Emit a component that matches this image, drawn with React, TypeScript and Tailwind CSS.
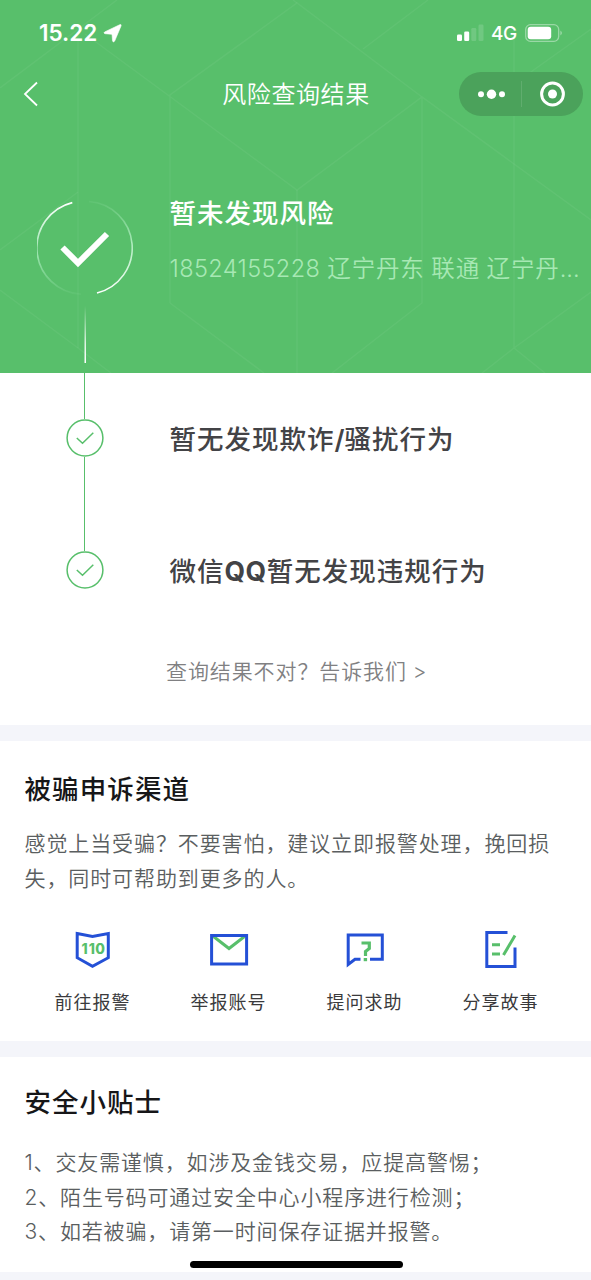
import React from 'react';

const GREEN = '#58bf6b';
const BLUE = '#2450d6';

const tips = [
  '1、交友需谨慎，如涉及金钱交易，应提高警惕；',
  '2、陌生号码可通过安全中心小程序进行检测；',
  '3、如若被骗，请第一时间保存证据并报警。',
];

function HexPattern() {
  return (
    <svg className="absolute inset-0 h-full w-full" viewBox="0 0 591 373" fill="none" stroke="#fff" strokeOpacity="0.05" strokeWidth="1.5">
      <path d="M0 88L117 0M78 36V348M85 34L297 190L422 97L591 220M170 303V95L297 3L422 97V303L332 373" />
      <path d="M297 3L293 0M0 250L78 192M0 290L78 348L111 373M170 303L264 373M297 190V373" />
      <path d="M363 49L428 0M514 36V348M514 84L591 29M482 373L514 348L591 292M514 348L545 373" />
    </svg>
  );
}

function StatusBar() {
  return (
    <div className="flex h-[66px] items-center justify-between pl-[39px] pr-[28px] text-white">
      <div className="flex items-center gap-[6px]">
        <span className="text-[22.5px] font-semibold leading-none">15.22</span>
        <svg width="19" height="19" viewBox="0 0 19 19" fill="#fff" stroke="#fff" strokeWidth="0.6">
          <path d="M16.600 0.800Q18.700 0 18 2L11.700 17Q10.300 19.300 9.500 16.700L9.100 11Q9 10.300 8.300 10.200L2 9.700Q0 9 1.700 7.900Z" />
        </svg>
      </div>
      <div className="flex items-center">
        <svg width="28" height="18" viewBox="0 0 28 18" fill="#fff">
          <rect x="0" y="10.500" width="5" height="6.500" rx="1.300" />
          <rect x="7.200" y="7.500" width="5" height="9.500" rx="1.300" />
          <rect x="14.300" y="4" width="5" height="13" rx="1.300" opacity="0.150" />
          <rect x="21.500" y="0.500" width="5" height="16.500" rx="1.300" opacity="0.150" />
        </svg>
        <span className="ml-[6px] w-[26px] text-[19px] font-medium leading-none tracking-[-0.5px]">4G</span>
        <svg className="ml-[8px]" width="38" height="18" viewBox="0 0 38 18" fill="none">
          <rect x="0.700" y="0.700" width="33" height="16.600" rx="4.800" stroke="#fff" strokeOpacity="0.400" strokeWidth="1.300" />
          <rect x="2.700" y="2.700" width="23.500" height="12.600" rx="3" fill="#fff" />
          <path d="M35.500 6.500Q38 9 35.500 11.500Z" fill="#fff" fillOpacity="0.500" />
        </svg>
      </div>
    </div>
  );
}

function NavBar() {
  return (
    <div className="flex h-[56px] items-center justify-between pl-[23px] pr-[8px]">
      <svg width="16" height="26" viewBox="0 0 16 26" fill="none" stroke="#fff" strokeWidth="1.800">
        <path d="M14 1.500L2 13L14 24.500" />
      </svg>
      <h1 className="ml-[94px] pt-px text-[24px] font-[350] leading-none tracking-[0.6px] text-white">风险查询结果</h1>
      <div className="flex h-[44px] w-[124px] items-center rounded-full bg-[#4ba25b]">
        <svg width="124" height="44" viewBox="0 0 124 44" fill="#fff">
          <circle cx="22" cy="22.300" r="3" />
          <circle cx="32.500" cy="22.300" r="4.700" />
          <circle cx="43" cy="22.300" r="3" />
          <path d="M62.500 9V35" stroke="#fff" strokeOpacity="0.120" />
          <circle cx="93.500" cy="22" r="10.900" fill="none" stroke="#fff" strokeWidth="3" />
          <circle cx="93.500" cy="22" r="4.500" />
        </svg>
      </div>
    </div>
  );
}

function BigCheck() {
  return (
    <svg width="96" height="166" viewBox="0 0 96 166" fill="none">
      <defs>
        <linearGradient id="arcLeft" x1="0" y1="0" x2="0" y2="1">
          <stop offset="0" stopColor="#fff" />
          <stop offset="0.550" stopColor="#a5e9b8" stopOpacity="0.900" />
          <stop offset="1" stopColor="#a5e9b8" stopOpacity="0.080" />
        </linearGradient>
        <linearGradient id="arcRight" x1="0" y1="1" x2="0" y2="0">
          <stop offset="0" stopColor="#fff" />
          <stop offset="0.550" stopColor="#b5efc4" stopOpacity="0.900" />
          <stop offset="1" stopColor="#a5e9b8" stopOpacity="0.100" />
        </linearGradient>
        <linearGradient id="stem" x1="0" y1="0" x2="0" y2="1">
          <stop offset="0" stopColor="#fff" stopOpacity="0" />
          <stop offset="0.650" stopColor="#fff" stopOpacity="0.800" />
          <stop offset="1" stopColor="#fff" />
        </linearGradient>
      </defs>
      <path d="M35.300 2.600A46.500 46.500 0 0 0 44 94.200" stroke="url(#arcLeft)" strokeWidth="1.600" />
      <path d="M60 93A46.500 46.500 0 0 0 52 1.500" stroke="url(#arcRight)" strokeWidth="1.600" />
      <path d="M25.500 47.500L41 63L70 34" stroke="#fff" strokeWidth="6" />
      <rect x="47.500" y="106" width="1.500" height="57" fill="url(#stem)" />
    </svg>
  );
}

function SmallCheck() {
  return (
    <svg width="38" height="38" viewBox="0 0 38 38" fill="none" stroke={GREEN}>
      <circle cx="19" cy="19" r="17.900" strokeWidth="1.500" />
      <path d="M10.800 19L16.500 24.300L27.300 13.800" strokeWidth="1.500" />
    </svg>
  );
}

function PoliceIcon() {
  return (
    <svg width="40" height="40" viewBox="0 0 40 40" fill="none">
      <path d="M4.200 3.500L19.500 6.500L35.300 3.500V27.700L19.500 36.300L4.200 27.700Z" stroke={BLUE} strokeWidth="3" />
      <text x="8.500 15.800 22.300" y="24.300" fontSize="14" fontWeight="800" fill={GREEN}>110</text>
    </svg>
  );
}

function MailIcon() {
  return (
    <svg width="40" height="40" viewBox="0 0 40 40" fill="none">
      <path d="M4.500 6.500L20 18.500L35.500 6.500" stroke={GREEN} strokeWidth="3" />
      <rect x="2.600" y="5.500" width="35" height="28.500" stroke={BLUE} strokeWidth="3" />
    </svg>
  );
}

function QuestionIcon() {
  return (
    <svg width="40" height="40" viewBox="0 0 40 40" fill="none">
      <path d="M15.500 29.300H10L3.200 34.500V5H37.300V29.300H25" stroke={BLUE} strokeWidth="3" />
      <path d="M16.500 13H24.300V18.500L20.500 21.500V26" stroke={GREEN} strokeWidth="3.200" />
      <rect x="18.700" y="28" width="3.400" height="3.200" fill={GREEN} />
    </svg>
  );
}

function StoryIcon() {
  return (
    <svg width="40" height="40" viewBox="0 0 40 40" fill="none">
      <path d="M26.500 2.500H5.800V36.500H34V17.500" stroke={BLUE} strokeWidth="3" />
      <path d="M11 14.800H19M11 24H19M22.500 25L34 5.500" stroke={GREEN} strokeWidth="3" />
    </svg>
  );
}

const channels = [
  { label: '前往报警', icon: <PoliceIcon /> },
  { label: '举报账号', icon: <MailIcon /> },
  { label: '提问求助', icon: <QuestionIcon /> },
  { label: '分享故事', icon: <StoryIcon /> },
];

export default function App() {
  return (
    <main className="flex h-[1280px] w-[591px] flex-col overflow-hidden bg-[#f4f5fa] font-[Inter,'Noto_Sans_CJK_SC',sans-serif]">
      {/* Hero */}
      <header className="relative h-[373px] shrink-0 bg-[#58bf6b]">
        <HexPattern />
        <div className="relative">
          <StatusBar />
          <NavBar />
          <div className="flex pl-[36.500px] pt-[78px]">
            <BigCheck />
            <div className="ml-[37px] w-[413px]">
              <h2 className="text-[26.500px] font-medium leading-[27px] tracking-[1px] text-white">暂未发现风险</h2>
              <p className="mt-[27px] whitespace-nowrap text-[23.500px] font-[350] leading-[30px] tracking-[0.850px] text-[#a7e8b4]">
                <span className="font-light tracking-[0.400px]">18524155228 </span>辽宁丹东<span className="tracking-[0px]"> </span>联通<span className="tracking-[0px]"> </span>辽宁丹<span className="tracking-[0px]">...</span>
              </p>
            </div>
          </div>
        </div>
      </header>

      {/* Result timeline */}
      <section className="h-[352px] shrink-0 bg-white">
        <div className="flex items-end pl-[65.500px]">
          <div className="flex flex-col items-center">
            <div className="h-[46px] w-[1.500px] bg-[#58bf6b]" />
            <SmallCheck />
          </div>
          <h3 className="ml-[66px] text-[26.500px] font-medium leading-[36px] tracking-[1px] text-[#434346]">
            暂无发现欺诈<span className="font-semibold tracking-[0px]">/</span>骚扰行为
          </h3>
        </div>
        <div className="flex items-end pl-[65.500px]">
          <div className="flex flex-col items-center">
            <div className="h-[94px] w-[1.500px] bg-[#58bf6b]" />
            <SmallCheck />
          </div>
          <h3 className="ml-[66px] text-[26.500px] font-medium leading-[36px] tracking-[1px] text-[#434346]">
            微信<span className="font-bold tracking-[0.500px]">QQ</span>暂无发现违规行为
          </h3>
        </div>
        <p className="mt-[67px] pl-[166px] text-[21px] font-[350] leading-[32px] tracking-[0.900px] text-[#808082]">查询结果不对？告诉我们<span className="tracking-[0px]"> &gt;</span></p>
      </section>

      {/* Appeal channels */}
      <section className="mt-4 h-[300px] shrink-0 bg-white px-[24.500px] pt-[30px]">
        <h2 className="text-[26.500px] font-medium leading-[36px] tracking-[1.100px] text-[#161618]">被骗申诉渠道</h2>
        <p className="mt-[20px] w-[540px] text-[21px] font-[350] leading-[34.500px] tracking-[0.900px] text-[#5a5e60]">
          感觉上当受骗？不要害怕，建议立即报警处理，挽回损失，同时可帮助到更多的人。
        </p>
        <div className="mt-[34px] flex">
          {channels.map((c) => (
            <div key={c.label} className="flex w-[136px] shrink-0 flex-col items-center gap-[19px]">
              {c.icon}
              <span className="text-[18px] leading-[28px] tracking-[1px] text-[#3a3a3c]">{c.label}</span>
            </div>
          ))}
        </div>
      </section>

      {/* Safety tips */}
      <section className="relative mt-4 h-[215px] shrink-0 bg-white px-[24.500px] pt-[27px]">
        <h2 className="text-[26.500px] font-medium leading-[36px] tracking-[1px] text-[#161618]">安全小贴士</h2>
        <ul className="mt-[26px] text-[21px] font-[350] leading-[34.500px] tracking-[0.850px] text-[#5a5e60]">
          {tips.map((tip) => (
            <li key={tip} className="whitespace-nowrap">{tip}</li>
          ))}
        </ul>
        <div className="absolute bottom-[4px] left-[190px] h-[7px] w-[213px] rounded-full bg-black" />
      </section>
    </main>
  );
}
